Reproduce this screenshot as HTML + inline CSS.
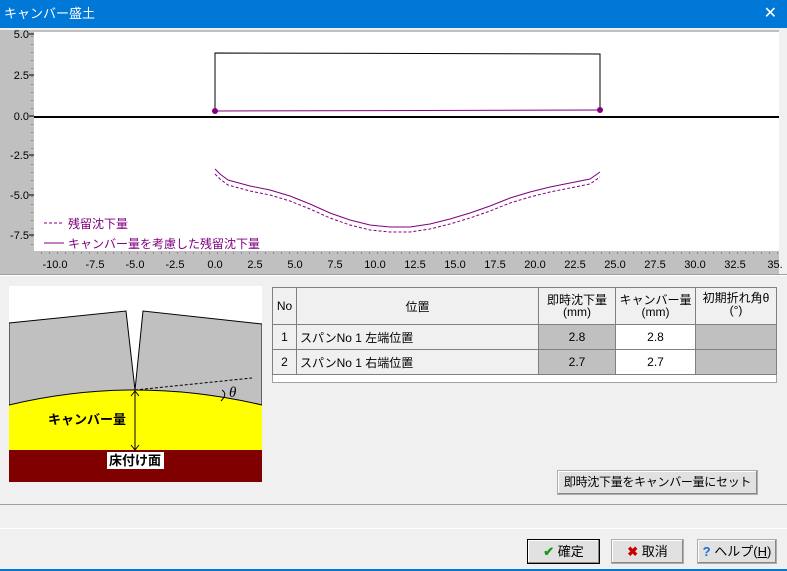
<!DOCTYPE html>
<html><head><meta charset="utf-8"><style>
*{margin:0;padding:0;box-sizing:border-box}
body{width:787px;height:571px;background:#f0f0f0;font-family:"Liberation Sans","Noto Sans CJK JP",sans-serif;font-size:12px;position:relative;overflow:hidden}
.abs{position:absolute}
.title{left:0;top:0;width:787px;height:28px;background:#0078d7;color:#fff;font-size:13px;line-height:27px;padding-left:4px}
table{border-collapse:collapse}
td{border:1px solid #808080;height:25px;font-size:12px}
.btn{background:#e1e1e1;border:1px solid #adadad;box-shadow:inset -1px -1px 0 #888,inset 1px 1px 0 #fff;text-align:center;font-size:13px;white-space:nowrap;overflow:hidden}
</style></head><body>
<div class="abs title">キャンバー盛土<span style="position:absolute;right:10px;top:0;font-size:16px">✕</span></div>
<svg class="abs" style="left:0;top:28px" width="787" height="250" viewBox="0 28 787 250">
<rect x="0" y="30" width="787" height="244" fill="#c0c0c0"/>
<rect x="779" y="30" width="8" height="244" fill="#f0f0f0"/>
<rect x="34" y="32" width="745" height="219" fill="#fff"/>
<g font-size="11" fill="#000" font-family="Liberation Sans Narrow,Liberation Sans,sans-serif" text-anchor="end">
<text x="29" y="38">5.0</text><text x="29" y="79">2.5</text><text x="29" y="120">0.0</text><text x="29" y="159">-2.5</text><text x="29" y="199">-5.0</text><text x="29" y="239">-7.5</text>
</g>
<g stroke="#000" stroke-width="1">
<line x1="29" y1="34" x2="34" y2="34"/><line x1="29" y1="75" x2="34" y2="75"/><line x1="29" y1="116" x2="34" y2="116"/><line x1="29" y1="155" x2="34" y2="155"/><line x1="29" y1="195" x2="34" y2="195"/><line x1="29" y1="235" x2="34" y2="235"/>
</g>
<g stroke="#555" stroke-dasharray="1,7" stroke-dashoffset="-2"><line x1="32" y1="34" x2="32" y2="250"/><line x1="39" y1="253" x2="779" y2="253" stroke-dasharray="1,7"/></g>
<g font-size="11" text-anchor="middle" font-family="Liberation Sans Narrow,Liberation Sans,sans-serif">
<text x="55" y="268">-10.0</text><text x="95" y="268">-7.5</text><text x="135" y="268">-5.0</text><text x="175" y="268">-2.5</text><text x="215" y="268">0.0</text><text x="255" y="268">2.5</text><text x="295" y="268">5.0</text><text x="335" y="268">7.5</text><text x="375" y="268">10.0</text><text x="415" y="268">12.5</text><text x="455" y="268">15.0</text><text x="495" y="268">17.5</text><text x="535" y="268">20.0</text><text x="575" y="268">22.5</text><text x="615" y="268">25.0</text><text x="655" y="268">27.5</text><text x="695" y="268">30.0</text><text x="735" y="268">32.5</text><text x="775" y="268">35.</text>
</g>
<line x1="34" y1="117" x2="779" y2="117" stroke="#000" stroke-width="2"/>
<polyline points="215,111 215,53 600,54 600,110" fill="none" stroke="#000"/>
<line x1="215" y1="111" x2="600" y2="110" stroke="#800080"/>
<circle cx="215" cy="111" r="3" fill="#800080"/><circle cx="600" cy="110" r="3" fill="#800080"/>
<polyline points="215,169 220,174 228,180 250,186 270,190 290,196 310,204 330,213 350,220 370,225 390,227 410,227 430,224 450,219 470,213 490,206 510,198 530,192 550,187 570,183 590,179 600,172" fill="none" stroke="#800080"/>
<polyline points="215,174 220,179 228,185 250,191 270,195 290,201 310,209 330,218 350,225 370,230 390,232 410,232 430,229 450,224 470,218 490,211 510,203 530,197 550,192 570,188 590,184 600,177" fill="none" stroke="#800080" stroke-dasharray="3,2"/>
<line x1="44" y1="223" x2="64" y2="223" stroke="#800080" stroke-dasharray="3,2"/>
<line x1="44" y1="243" x2="64" y2="243" stroke="#800080"/>
<text x="68" y="228" font-size="12" fill="#800080">残留沈下量</text>
<text x="68" y="248" font-size="12" fill="#800080">キャンバー量を考慮した残留沈下量</text>
</svg>
<div class="abs" style="left:0;top:274px;width:787px;height:2px;border-top:1px solid #a0a0a0;border-bottom:1px solid #fff"></div>
<svg class="abs" style="left:9px;top:286px" width="253" height="196" viewBox="9 286 253 196">
<rect x="9" y="286" width="253" height="196" fill="#fff"/>
<path d="M9,405 Q72,390 135,390 Q198,390 262,405 L262,450 L9,450Z" fill="#ffff00"/>
<rect x="9" y="450" width="253" height="32" fill="#800000"/>
<path d="M9,323 L126,311 L135,390 L143,311 L262,324 L262,405 Q198,390 135,390 Q72,390 9,405Z" fill="#c0c0c0" stroke="#000"/>
<line x1="135" y1="390" x2="252" y2="378" stroke="#000" stroke-dasharray="3,2"/>
<path d="M222,390 Q228,394 221,401" fill="none" stroke="#000"/>
<text x="229" y="397" font-size="15" font-style="italic" font-family="Liberation Serif,serif">θ</text>
<line x1="135" y1="391" x2="135" y2="450" stroke="#000"/>
<path d="M131,396 L135,391 L139,396 M131,445 L135,450 L139,445" fill="none" stroke="#000"/>
<text x="48" y="424" font-size="13" font-weight="bold">キャンバー量</text>
<rect x="107" y="452" width="57" height="17" fill="#fff"/>
<text x="109" y="465" font-size="13" font-weight="bold">床付け面</text>
</svg>
<div class="abs" style="left:272px;top:287px;width:505px;height:96px;background:#fff;border:1px solid #a0a0a0"></div>
<table class="abs" style="left:272px;top:287px;width:505px">
<tr style="background:#f0f0f0"><td style="width:24px;height:37px;text-align:center">No</td><td style="width:242px;text-align:center">位置</td><td style="width:77px;text-align:center;line-height:12px">即時沈下量<br>(mm)</td><td style="width:80px;text-align:center;line-height:12px">キャンバー量<br>(mm)</td><td style="text-align:center;line-height:12px;vertical-align:top;padding-top:4px">初期折れ角θ<br>(°)</td></tr>
<tr><td style="background:#f0f0f0;text-align:center">1</td><td style="background:#f0f0f0;padding-left:3px">スパンNo 1 左端位置</td><td style="background:#c0c0c0;text-align:center">2.8</td><td style="background:#fff;text-align:center">2.8</td><td style="background:#c0c0c0"></td></tr>
<tr><td style="background:#f0f0f0;text-align:center">2</td><td style="background:#f0f0f0;padding-left:3px">スパンNo 1 右端位置</td><td style="background:#c0c0c0;text-align:center">2.7</td><td style="background:#fff;text-align:center">2.7</td><td style="background:#c0c0c0"></td></tr>
</table>
<div class="abs btn" style="left:557px;top:470px;width:201px;height:25px;line-height:23px;font-size:12px;letter-spacing:-0.3px">即時沈下量をキャンバー量にセット</div>
<div class="abs" style="left:0;top:504px;width:787px;height:25px;border-top:1px solid #a0a0a0;border-bottom:1px solid #fff"></div>
<div class="abs btn" style="left:527px;top:539px;width:73px;height:25px;line-height:23px;border:1px solid #000"><span style="color:#1a9a1a;font-weight:bold">✔</span> 確定</div>
<div class="abs btn" style="left:611px;top:539px;width:73px;height:25px;line-height:23px"><span style="color:#c00;font-weight:bold">✖</span> 取消</div>
<div class="abs btn" style="left:697px;top:539px;width:80px;height:25px;line-height:23px"><span style="color:#1c6fd0;font-weight:bold">?</span> ヘルプ(<u>H</u>)</div>
<div class="abs" style="left:0;top:569px;width:787px;height:2px;background:#0078d7"></div>
</body></html>
